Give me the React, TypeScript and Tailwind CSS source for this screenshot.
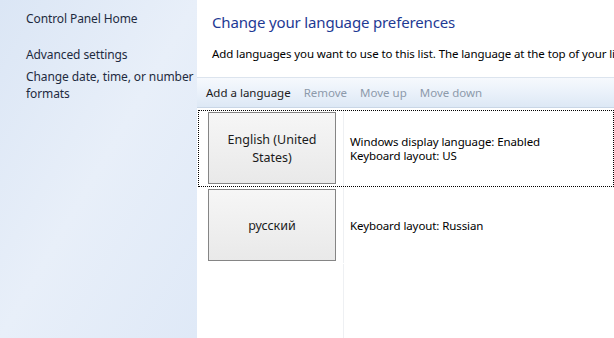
import React from "react";

const font = { fontFamily: '"Segoe UI", "Noto Sans", "Open Sans", sans-serif' };

interface Lang {
  name: string[];
  info: string[];
  focused?: boolean;
}

const langs: Lang[] = [
  {
    name: ["English (United", "States)"],
    info: ["Windows display language: Enabled", "Keyboard layout: US"],
    focused: true,
  },
  { name: ["русский"], info: ["Keyboard layout: Russian"] },
];

function LangRow({ lang }: { lang: Lang }) {
  return (
    <div
      className={`flex h-[77px] ${
        lang.focused ? "border border-dotted border-black" : "border border-transparent"
      }`}
    >
      <div className="w-[145px] shrink-0 border-r border-[#eef0f3] pl-[9px] pt-[1px]">
        <div className="w-[128px] h-[72px] border border-[#858585] bg-gradient-to-b from-[#f6f6f6] to-[#e9e9e9] flex flex-col items-center justify-center pt-[2px] text-[12.5px] leading-[18px] text-[#1b1b1b]">
          {lang.name.map((n) => (
            <span key={n}>{n}</span>
          ))}
        </div>
      </div>
      <div className="flex flex-col justify-center pl-[6px] text-[11.5px] leading-[14px] tracking-[-0.1px] text-black">
        {lang.info.map((t) => (
          <span key={t} className="whitespace-nowrap">
            {t}
          </span>
        ))}
      </div>
    </div>
  );
}

export default function App() {
  return (
    <div className="flex w-[614px] h-[338px] overflow-hidden" style={font}>
      <aside className="w-[197px] shrink-0 bg-gradient-to-br from-[#dbe6f5] via-[#e8eff9] to-[#dfe9f7] pl-[26px] pt-[10px] text-[12px] leading-[17px] tracking-[-0.1px] text-[#1e2b3f]">
        <p>Control Panel Home</p>
        <p className="mt-[19px]">Advanced settings</p>
        <p className="mt-[5px] w-[170px]">Change date, time, or number formats</p>
      </aside>

      <main className="flex-1 min-w-0 bg-white flex flex-col overflow-hidden">
        <h1 className="pl-[15px] pt-[12px] text-[15px] leading-[21px] tracking-[-0.15px] text-[#1e3a94] whitespace-nowrap">
          Change your language preferences
        </h1>
        <p className="pl-[15px] mt-[13px] text-[11.5px] leading-[16px] tracking-[-0.1px] text-black whitespace-nowrap">
          Add languages you want to use to this list. The language at the top of your list is your primary language.
        </p>

        <div className="mt-[15px] h-[31px] border-t border-[#dce4ee] border-b border-b-[#c9d6e6] bg-gradient-to-b from-[#f6f9fd] via-[#eaf1fa] to-[#dde8f5] flex items-center gap-[13px] pl-[9px] text-[11.5px]">
          <span className="text-[#1b1b1b]">Add a language</span>
          <span className="text-[#8d9aab]">Remove</span>
          <span className="text-[#8d9aab]">Move up</span>
          <span className="text-[#8d9aab]">Move down</span>
        </div>

        <div className="flex-1 flex flex-col pt-[2px] pl-[1px]">
          {langs.map((l) => (
            <LangRow key={l.name.join(" ")} lang={l} />
          ))}
          <div className="flex-1 flex">
            <div className="w-[146px] border-r border-[#eef0f3]" />
          </div>
        </div>
      </main>
    </div>
  );
}
